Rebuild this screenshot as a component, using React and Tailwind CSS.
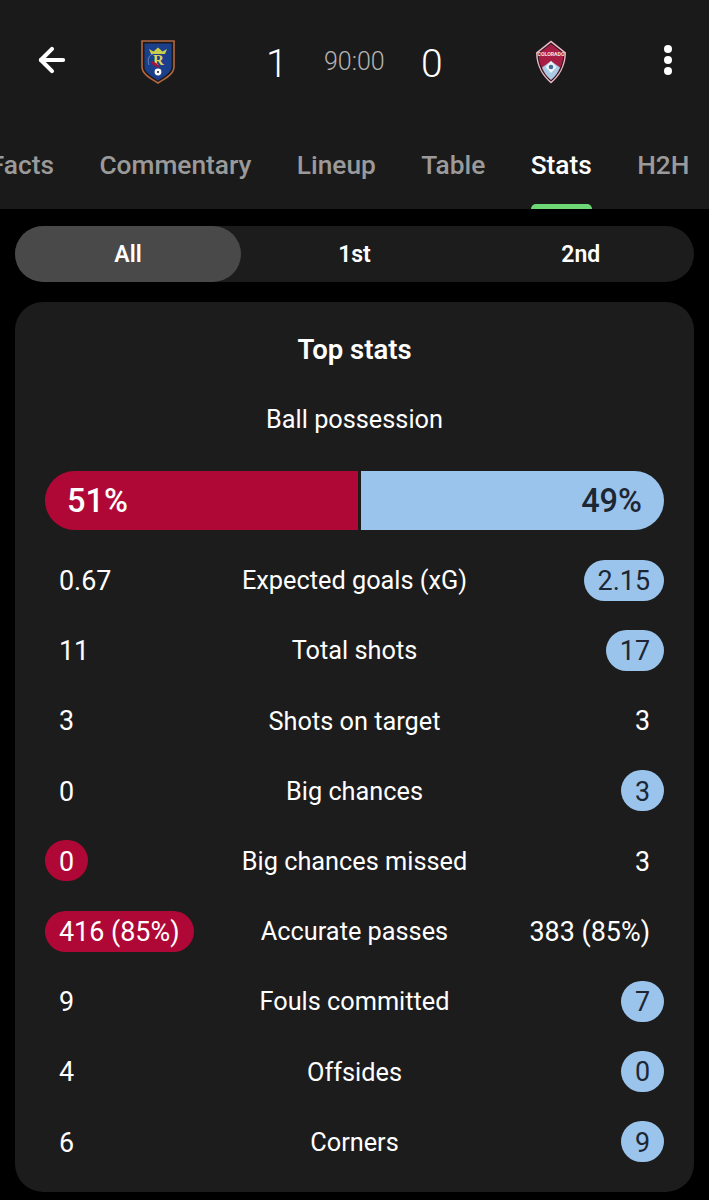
import React from 'react';
import { ArrowLeft } from 'lucide-react';

const home = 'bg-[#b00836] text-white';
const away = 'bg-[#9ac4ec] text-[#1d2733]';

const rows = [
  ['0.67', 'Expected goals (xG)', '2.15', 'away'],
  ['11', 'Total shots', '17', 'away'],
  ['3', 'Shots on target', '3', null],
  ['0', 'Big chances', '3', 'away'],
  ['0', 'Big chances missed', '3', 'home'],
  ['416 (85%)', 'Accurate passes', '383 (85%)', 'home'],
  ['9', 'Fouls committed', '7', 'away'],
  ['4', 'Offsides', '0', 'away'],
  ['6', 'Corners', '9', 'away'],
];

const tabs = [
  ['Facts', 'w-[54px] justify-end overflow-hidden'],
  ['Commentary', ''],
  ['Lineup', ''],
  ['Table', ''],
  ['Stats', 'text-white'],
  ['H2H', ''],
];

const RealCrest = () => (
  <svg width="34" height="44" viewBox="0 0 34 44">
    <path d="M1 1H33V27C33 34 24 39 17 43C10 39 1 34 1 27Z" fill="#1d1a18" stroke="#b5673f" strokeWidth="1.6" />
    <path d="M3.5 3.5H30.5V26.5C30.5 32.5 23 36.5 17 40.5C11 36.5 3.5 32.5 3.5 26.5Z" fill="#1b3f8b" />
    <path d="M8 9L12.5 11.5L17 7.5L21.5 11.5L26 9L24 14H10Z" fill="#c9cf4a" />
    <path d="M8 25C6 20 8 15 12 14" fill="none" stroke="#6f9bc8" strokeWidth="0.8" />
    <text x="17.5" y="25" textAnchor="middle" fontFamily="Liberation Serif, serif" fontWeight="700" fontSize="15" fill="#e4d45a">R</text>
    <path d="M10 21C13 21 17 24 19 28L14 26C12 25 10 24 10 21Z" fill="#a3123c" />
    <circle cx="17" cy="32" r="3.4" fill="#fff" />
    <circle cx="17" cy="32" r="1.1" fill="#2a2a2a" />
  </svg>
);

const RapidsCrest = () => (
  <svg width="32" height="44" viewBox="0 0 32 44">
    <path d="M16 0.5L31 12.5C31 26 24 37 16 43.5C8 37 1 26 1 12.5Z" fill="#eeb9c8" />
    <path d="M16 2.5L29.5 13.2C29.5 26 23 36 16 41.5C9 36 2.5 26 2.5 13.2Z" fill="#2a1a20" />
    <path d="M16 4L28.4 13.6C28.4 25 22.5 35 16 40C9.5 35 3.6 25 3.6 13.6Z" fill="#a81d43" />
    <path d="M16 21L25 27.5C23 33 19.5 37 16 40C12.5 37 9 33 7 27.5Z" fill="#a9cbe6" />
    <path d="M16 21L21.5 27L16 33L10.5 27Z" fill="#eef3f7" />
    <circle cx="16" cy="27" r="2.3" fill="#3f6d9c" />
    <text x="16" y="16" textAnchor="middle" fontFamily="Roboto, sans-serif" fontWeight="700" fontSize="5.2" fill="#f6e3e8">COLORADO</text>
  </svg>
);

const StatValue = ({ value, tone }) => (
  <span className={`h-[41px] min-w-[43px] px-3.5 pt-0.5 rounded-full flex items-center justify-center text-[26.9px] ${tone === 'home' ? home : tone === 'away' ? away : 'text-white'}`}>
    {value}
  </span>
);

const App = () => {
  return (
    <div className="w-[709px] h-[1200px] bg-black overflow-hidden font-['Roboto',sans-serif]">
      <header className="h-[209px] bg-[#1a1a1a]">
        <div className="h-[125px] relative">
          <ArrowLeft size={38} strokeWidth={2.6} className="absolute left-[33px] top-[41px] text-white" />
          <div className="absolute left-[141px] top-[40px]"><RealCrest /></div>
          <span className="absolute left-[266px] top-[41px] text-[39px] leading-[46px] font-light text-white">1</span>
          <span className="absolute left-[324px] top-[47px] text-[25px] leading-[30px] font-light text-[#b3b3b3]">90:00</span>
          <span className="absolute left-[421px] top-[41px] text-[39px] leading-[46px] font-light text-white">0</span>
          <div className="absolute left-[535px] top-[40px]"><RapidsCrest /></div>
          <div className="absolute left-[664px] top-[45px] flex flex-col gap-[3px]">
            <span className="w-[8px] h-[8px] rounded-full bg-white" />
            <span className="w-[8px] h-[8px] rounded-full bg-white" />
            <span className="w-[8px] h-[8px] rounded-full bg-white" />
          </div>
        </div>
        <nav className="h-[84px] flex gap-[45.4px] text-[26.3px] font-medium text-[#9a9a9a]">
          {tabs.map(([name, cls]) => (
            <div key={name} className={`h-full pt-[23px] leading-[34px] relative flex ${cls}`}>
              {name}
              {name === 'Stats' && (
                <span className="absolute left-0 right-0 bottom-0 h-[5px] rounded-t-[5px] bg-[#6fd876]" />
              )}
            </div>
          ))}
        </nav>
      </header>

      <main className="px-[15px] pt-[17px]">
        <div className="h-[56px] rounded-full bg-[#1c1c1c] grid grid-cols-3 text-[23px] font-semibold text-white">
          <div className="rounded-full bg-[#494949] pt-0.5 flex items-center justify-center w-[226px]">All</div>
          <div className="pt-0.5 flex items-center justify-center">1st</div>
          <div className="pt-0.5 flex items-center justify-center">2nd</div>
        </div>

        <section className="mt-[20px] h-[890px] rounded-[28px] bg-[#1c1c1c] px-[30px] pt-[31px] text-[25.3px] text-white">
          <h2 className="text-center text-[27.5px] leading-[34px] font-semibold">Top stats</h2>
          <p className="mt-[36px] text-center leading-[34px]">Ball possession</p>
          <div className="mt-[34px] h-[59px] flex gap-[3px] text-[32.5px] font-medium">
            <div className={`w-[313px] rounded-l-full pl-[22px] pt-0.5 flex items-center ${home}`}>51%</div>
            <div className={`flex-1 rounded-r-full pr-[22px] pt-0.5 flex items-center justify-end ${away}`}>49%</div>
          </div>
          <div className="mt-[29.7px] flex flex-col gap-[29.2px]">
            {rows.map(([left, label, right, tone]) => (
              <div key={label} className="h-[41px] relative flex items-center justify-between">
                <StatValue value={left} tone={tone === 'home' ? 'home' : null} />
                <span className="absolute inset-x-0 pt-0.5 text-center pointer-events-none">{label}</span>
                <StatValue value={right} tone={tone === 'away' ? 'away' : null} />
              </div>
            ))}
          </div>
        </section>
      </main>
    </div>
  );
};

export default App;
